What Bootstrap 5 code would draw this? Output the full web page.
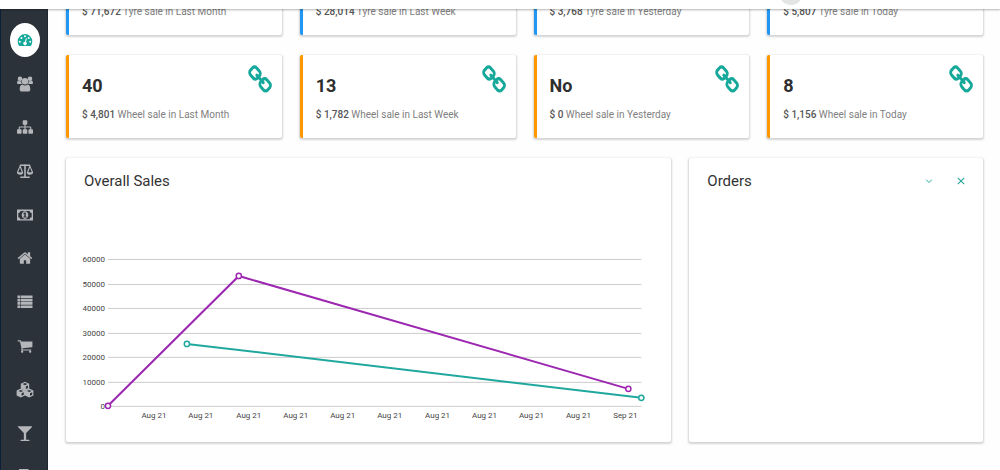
<!DOCTYPE html>
<html lang="en">
<head>
<meta charset="utf-8">
<meta name="viewport" content="width=device-width, initial-scale=1">
<title>Sales dashboard</title>
<link href="https://cdn.jsdelivr.net/npm/bootstrap@5.3.0/dist/css/bootstrap.min.css" rel="stylesheet">
<style>
  body { font-family: Roboto, "Liberation Sans", sans-serif; color: #333; background: #fefefe; overflow: hidden; }
  .topbar { height: 9px; background: #fff; box-shadow: 0 1px 2px rgba(0,0,0,.3); overflow: hidden; z-index: 20; }
  .avatar { width: 24px; height: 24px; margin-top: -19px; margin-right: 197px; background: #e3e5e5; }
  .sidebar { width: 48px; background: #2c323a; border-left: 1px solid #0b2038; border-right: 1px solid #1e2731; overflow: hidden; z-index: 10; padding-left: 1px; }
  .side-list { display: grid; grid-template-rows: repeat(11, 1fr); height: 481px; margin-top: 18px; }
  .side-link { width: 30px; height: 34px; color: #b4b6b9; }
  .side-link.active { background: #fff; color: #16a89a; }
  .side-link svg { width: 16px; height: 16px; fill: currentColor; }
  .page-area { margin: -68px 0 0 48px; padding: 0 17px 28px 18px; }
  .tiles { --bs-gutter-x: 18px; --bs-gutter-y: 20px; }
  .panel { background: #fff; border-radius: 2px; box-shadow: 0 1px 2px 1px rgba(0,0,0,.17); }
  .tile { height: 83px; padding: 12px 8px 15px 13px; }
  .tile-blue { border-left: 3px solid #2196f3; }
  .tile-orange { border-left: 3px solid #ff9800; }
  .tile h2 { font-size: 18px; line-height: 20px; font-weight: 700; margin: 9px 0 11px; color: #2e2e2e; }
  .tile p { font-size: 10px; line-height: 16px; color: #808080; margin: 0; white-space: nowrap; }
  .tile p strong { font-weight: 500; color: #555; }
  .chain { width: 26px; height: 30px; margin-top: -2px; fill: #16a89a; flex: none; }
  .box { min-height: 284px; padding: 13px 18px; }
  .box h3 { font-size: 15px; line-height: 20px; font-weight: 400; margin: 0; color: #333; }
  .tools { margin-right: -2px; }
  .tool { width: 12px; height: 20px; color: #2ba89f; }
  .tool svg { width: 8px; height: 8px; fill: none; stroke: currentColor; }
  .chart { margin-top: 60px; width: 100%; height: auto; display: block; overflow: visible; }
  .chart text { font-size: 8px; fill: #444; }
  .grid-line { stroke: #ccc; stroke-width: 1; }
</style>
</head>
<body>
<svg class="d-none" aria-hidden="true">
  <symbol id="chain" viewBox="0 0 1792 1792" preserveAspectRatio="none"><path d="M1456 1216q0-40-28-68l-208-208q-28-28-68-28-42 0-72 32 3 3 19 18.500t21.500 21.500 15 19 13 25.500 3.500 27.500q0 40-28 68t-68 28q-15 0-27.500-3.500t-25.500-13-19-15-21.500-21.500-18.500-19q-33 31-33 73 0 40 28 68l206 207q27 27 68 27 40 0 68-26l147-146q28-28 28-67zm-703-705q0-40-28-68l-206-207q-28-28-68-28-39 0-68 27l-147 146q-28 28-28 67 0 40 28 68l208 208q27 27 68 27 42 0 72-31-3-3-19-18.500t-21.500-21.500-15-19-13-25.500-3.500-27.500q0-40 28-68t68-28q15 0 27.500 3.500t25.500 13 19 15 21.500 21.500 18.500 19q33-31 33-73zm895 705q0 120-85 203l-147 146q-83 83-203 83-121 0-204-85l-206-207q-83-83-83-203 0-123 88-209l-88-88q-86 88-208 88-120 0-204-84l-208-208q-84-84-84-204t85-203l147-146q83-83 203-83 121 0 204 85l206 207q83 83 83 203 0 123-88 209l88 88q86-88 208-88 120 0 204 84l208 208q84 84 84 204z"/></symbol>
</svg>

<header class="topbar fixed-top d-flex justify-content-end"><span class="avatar rounded-circle"></span></header>

<nav class="sidebar position-fixed top-0 bottom-0 start-0" aria-label="Main">
  <ul class="side-list list-unstyled mb-0">
    <li class="d-flex align-items-center justify-content-center"><a href="#" class="side-link active rounded-circle d-flex align-items-center justify-content-center" aria-label="Dashboard"><svg viewBox="0 0 16 16"><path fill-rule="evenodd" d="M8 2a7.300 7.300 0 0 0-7.300 7.300c0 1.600.4 2.900 1.100 4.200.2.300.4.500.8.500h10.800c.4 0 .6-.2.800-.5.700-1.300 1.100-2.600 1.100-4.200A7.300 7.300 0 0 0 8 2zM2.800 8.700a1 1 0 1 1 0 2 1 1 0 0 1 0-2zM4.400 5a1 1 0 1 1 0 2 1 1 0 0 1 0-2zM8 3.300a1 1 0 1 1 0 2 1 1 0 0 1 0-2zM11.700 5a1 1 0 1 1 0 2 1 1 0 0 1 0-2zM13.200 8.700a1 1 0 1 1 0 2 1 1 0 0 1 0-2zM9 6.200l.9.300-.9 3.500a1.700 1.700 0 1 1-1.100-.3z"/></svg></a></li>
    <li class="d-flex align-items-center justify-content-center"><a href="#" class="side-link d-flex align-items-center justify-content-center" aria-label="Customers"><svg viewBox="0 0 16 16"><circle cx="3" cy="2.800" r="2.300"/><circle cx="13" cy="2.800" r="2.300"/><circle cx="8" cy="5.200" r="3.200"/><path d="M.1 7.200c0-1.500.3-2.700 1.200-2.700.5.500 2 .9 3 .4-.1 1.200.2 2.400.8 3.200H2C.7 8.100.1 7.900.1 7.200zM15.900 7.200c0-1.500-.3-2.700-1.200-2.700-.5.500-2 .9-3 .4.100 1.200-.2 2.400-.8 3.200H14c1.300 0 1.900-.2 1.900-.9zM5.300 8.400c1.500 1.300 3.900 1.300 5.400 0 1.900.1 2.600 2.100 2.600 4.800 0 1.500-.9 2.300-2.200 2.300H4.900c-1.300 0-2.200-.8-2.200-2.300 0-2.700.7-4.700 2.600-4.800z"/></svg></a></li>
    <li class="d-flex align-items-center justify-content-center"><a href="#" class="side-link d-flex align-items-center justify-content-center" aria-label="Branches"><svg viewBox="0 0 1792 1792"><path d="M1792 1248v320q0 40-28 68t-68 28h-320q-40 0-68-28t-28-68v-320q0-40 28-68t68-28h96v-192h-512v192h96q40 0 68 28t28 68v320q0 40-28 68t-68 28h-320q-40 0-68-28t-28-68v-320q0-40 28-68t68-28h96v-192h-512v192h96q40 0 68 28t28 68v320q0 40-28 68t-68 28h-320q-40 0-68-28t-28-68v-320q0-40 28-68t68-28h96v-192q0-52 38-90t90-38h512v-192h-96q-40 0-68-28t-28-68v-320q0-40 28-68t68-28h320q40 0 68 28t28 68v320q0 40-28 68t-68 28h-96v192h512q52 0 90 38t38 90v192h96q40 0 68 28t28 68z"/></svg></a></li>
    <li class="d-flex align-items-center justify-content-center"><a href="#" class="side-link d-flex align-items-center justify-content-center" aria-label="Balance"><svg viewBox="0 0 16 16"><path fill-rule="evenodd" d="M7.200 1.500a.9.900 0 0 1 1.600 0H13.200v1.100l3 6.900c0 1.400-1.500 2.300-3.200 2.300s-3.200-.9-3.200-2.300L12.300 3H8.800v10.600h3.900v1.500H3.300v-1.500h3.900V3H3.700l2.500 6.500c0 1.400-1.500 2.300-3.200 2.300S-.2 10.900-.2 9.500l3-6.900V1.500zM3 4.500 1.200 9.300h3.600zM13 4.500l-1.800 4.800h3.600z"/></svg></a></li>
    <li class="d-flex align-items-center justify-content-center"><a href="#" class="side-link d-flex align-items-center justify-content-center" aria-label="Payments"><svg viewBox="0 0 16 16"><path fill-rule="evenodd" d="M0 2.600h16v11H0zM3.400 3.900c0 1.200-.9 2-2.100 2v4.400c1.200 0 2.100.8 2.100 2h9.200c0-1.200.9-2 2.100-2V5.900c-1.200 0-2.100-.8-2.100-2zM8 4.300c1.900 0 3.300 1.800 3.300 3.800S9.900 11.900 8 11.900 4.700 10.100 4.700 8.100 6.100 4.300 8 4.300zM7.600 5.600l-1.400 1 .5.800.6-.4v2.600h-.9v1h3.200v-1h-.8v-4z"/></svg></a></li>
    <li class="d-flex align-items-center justify-content-center"><a href="#" class="side-link d-flex align-items-center justify-content-center" aria-label="Home"><svg viewBox="0 0 1792 1792"><path d="M1472 992v480q0 26-19 45t-45 19h-384v-384h-256v384h-384q-26 0-45-19t-19-45v-480q0-1 .5-3t.5-3l575-474 575 474q1 2 1 6zm223-69l-62 74q-8 9-21 11h-3q-13 0-21-7l-692-577-692 577q-12 8-24 7-13-2-21-11l-62-74q-8-10-7-23.500t11-21.500l719-599q32-26 76-26t76 26l244 204v-195q0-14 9-23t23-9h192q14 0 23 9t9 23v408l219 182q10 8 11 21.500t-7 23.500z"/></svg></a></li>
    <li class="d-flex align-items-center justify-content-center"><a href="#" class="side-link d-flex align-items-center justify-content-center" aria-label="Lists"><svg viewBox="0 0 16 16"><path d="M.5 1.500h2.500v2.600H.5zM3.600 1.500h11.900v2.600H3.600zM.5 4.800h2.500v2.600H.5zM3.600 4.800h11.900v2.600H3.600zM.5 8.100h2.500v2.600H.5zM3.600 8.100h11.900v2.600H3.600zM.5 11.400h2.500V14H.5zM3.600 11.400h11.900V14H3.600z"/></svg></a></li>
    <li class="d-flex align-items-center justify-content-center"><a href="#" class="side-link d-flex align-items-center justify-content-center" aria-label="Cart"><svg viewBox="0 0 1792 1792"><path d="M704 1536q0 52-38 90t-90 38-90-38-38-90 38-90 90-38 90 38 38 90zm896 0q0 52-38 90t-90 38-90-38-38-90 38-90 90-38 90 38 38 90zm128-1088v512q0 24-16.500 42.500t-40.500 21.500l-1044 122q13 60 13 70 0 16-24 64h920q26 0 45 19t19 45-19 45-45 19h-1024q-26 0-45-19t-19-45q0-11 8-31.500t16-36 21.500-40 15.500-29.500l-177-823h-204q-26 0-45-19t-19-45 19-45 45-19h256q16 0 28.500 6.500t19.500 15.500 13 24.500 8 26 5.500 29.500 4.500 26h1201q26 0 45 19t19 45z"/></svg></a></li>
    <li class="d-flex align-items-center justify-content-center"><a href="#" class="side-link d-flex align-items-center justify-content-center" aria-label="Stock"><svg viewBox="0 0 16 16" overflow="visible"><g id="cube"><path fill-rule="evenodd" d="M8-.2 12.200 1.700V6.600L8 8.700 3.800 6.600V1.700zM8 1.100 5.700 2.100 8 3.200l2.300-1.100zM8.800 4.500v2.500l2.200-1.100V3.500z"/></g><use href="#cube" x="-4.200" y="6.800"/><use href="#cube" x="4.200" y="6.800"/></svg></a></li>
    <li class="d-flex align-items-center justify-content-center"><a href="#" class="side-link d-flex align-items-center justify-content-center" aria-label="Filter"><svg viewBox="0 0 1792 1792"><path d="M1699 186q0 35-43 78l-632 632v768h320q26 0 45 19t19 45-19 45-45 19h-896q-26 0-45-19t-19-45 19-45 45-19h320v-768l-632-632q-43-43-43-78 0-23 18-36.500t38-17.500 43-4h1408q23 0 43 4t38 17.500 18 36.500z"/></svg></a></li>
    <li class="d-flex align-items-center justify-content-center"><a href="#" class="side-link d-flex align-items-center justify-content-center" aria-label="Reports"><svg viewBox="0 0 16 16"><path d="M2 0h9l3 3v13H2z"/></svg></a></li>
  </ul>
</nav>

<main class="page-area">
  <div class="row tiles">
    <div class="col-3"><div class="panel tile tile-blue d-flex align-items-end"><p><strong>$ 71,672</strong> Tyre sale in Last Month</p></div></div>
    <div class="col-3"><div class="panel tile tile-blue d-flex align-items-end"><p><strong>$ 28,014</strong> Tyre sale in Last Week</p></div></div>
    <div class="col-3"><div class="panel tile tile-blue d-flex align-items-end"><p><strong>$ 3,768</strong> Tyre sale in Yesterday</p></div></div>
    <div class="col-3"><div class="panel tile tile-blue d-flex align-items-end"><p><strong>$ 5,807</strong> Tyre sale in Today</p></div></div>

    <div class="col-3"><div class="panel tile tile-orange d-flex justify-content-between"><div><h2>40</h2><p><strong>$ 4,801</strong> Wheel sale in Last Month</p></div><svg class="chain"><use href="#chain"/></svg></div></div>
    <div class="col-3"><div class="panel tile tile-orange d-flex justify-content-between"><div><h2>13</h2><p><strong>$ 1,782</strong> Wheel sale in Last Week</p></div><svg class="chain"><use href="#chain"/></svg></div></div>
    <div class="col-3"><div class="panel tile tile-orange d-flex justify-content-between"><div><h2>No</h2><p><strong>$ 0</strong> Wheel sale in Yesterday</p></div><svg class="chain"><use href="#chain"/></svg></div></div>
    <div class="col-3"><div class="panel tile tile-orange d-flex justify-content-between"><div><h2>8</h2><p><strong>$ 1,156</strong> Wheel sale in Today</p></div><svg class="chain"><use href="#chain"/></svg></div></div>

    <div class="col-8">
      <section class="panel box">
        <h3>Overall Sales</h3>
        <svg class="chart" viewBox="0 0 570 172" role="img" aria-label="Overall sales line chart">
          <g class="grid-line">
            <path d="M24 8.500H558M24 33.500H558M24 57.500H558M24 82.500H558M24 106.500H558M24 131.500H558M24 155.500H558"/>
          </g>
          <g text-anchor="end">
            <text x="21" y="11">60000</text><text x="21" y="36">50000</text><text x="21" y="60">40000</text><text x="21" y="85">30000</text><text x="21" y="109">20000</text><text x="21" y="134">10000</text><text x="21" y="158">0</text>
          </g>
          <g text-anchor="middle">
            <text x="70" y="167">Aug 21</text><text x="117" y="167">Aug 21</text><text x="165" y="167">Aug 21</text><text x="212" y="167">Aug 21</text><text x="259" y="167">Aug 21</text><text x="306" y="167">Aug 21</text><text x="354" y="167">Aug 21</text><text x="401" y="167">Aug 21</text><text x="448" y="167">Aug 21</text><text x="495" y="167">Aug 21</text><text x="542" y="167">Sep 21</text>
          </g>
          <g fill="none" stroke="#9c27b0" stroke-width="2">
            <path d="M24 155 155 25 545 138"/>
            <g fill="#fff" stroke-width="1.500"><circle cx="24" cy="155" r="2.600"/><circle cx="155" cy="25" r="2.600"/><circle cx="545" cy="138" r="2.600"/></g>
          </g>
          <g fill="none" stroke="#20a89f" stroke-width="2">
            <path d="M103 93 558 147"/>
            <g fill="#fff" stroke-width="1.500"><circle cx="103" cy="93" r="2.600"/><circle cx="558" cy="147" r="2.600"/></g>
          </g>
        </svg>
      </section>
    </div>
    <div class="col-4">
      <section class="panel box">
        <div class="d-flex justify-content-between">
          <h3>Orders</h3>
          <div class="tools d-flex gap-3 align-items-center">
            <button type="button" class="tool btn p-0 border-0 me-1 d-flex align-items-center justify-content-center" aria-label="Collapse"><svg viewBox="0 0 8 8"><path d="M1.200 2.700 4 5.500 6.800 2.700"/></svg></button>
            <button type="button" class="tool btn p-0 border-0 d-flex align-items-center justify-content-center" aria-label="Close"><svg viewBox="0 0 8 8"><path d="M.8.8 7.200 7.200M7.200.8.8 7.200" stroke-width="1.200"/></svg></button>
          </div>
        </div>
      </section>
    </div>
  </div>
</main>
<script src="https://cdn.jsdelivr.net/npm/bootstrap@5.3.0/dist/js/bootstrap.bundle.min.js"></script>
</body>
</html>
